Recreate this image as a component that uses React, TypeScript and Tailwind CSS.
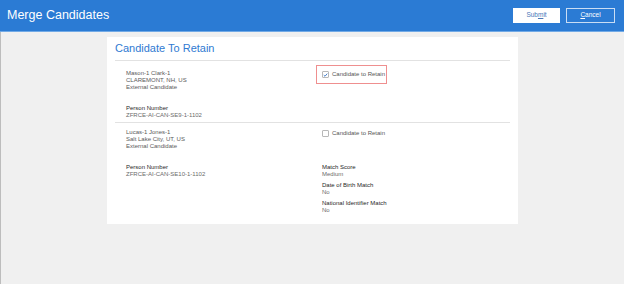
import React from "react";

const font = { fontFamily: '"Liberation Sans", Arial, sans-serif' };

function Checkbox({ checked }: { checked?: boolean }) {
  return (
    <span className="flex h-[7px] w-[7px] items-center justify-center rounded-[1px] border border-[#b8b8b8] bg-white">
      {checked && (
        <svg viewBox="0 0 8 8" className="h-[6px] w-[6px]">
          <path d="M1.2 4.2 L3.2 6 L6.8 1.8" fill="none" stroke="#2f6fc4" strokeWidth="1.4" />
        </svg>
      )}
    </span>
  );
}

function RetainToggle({ checked }: { checked?: boolean }) {
  return (
    <div className="flex items-center gap-[3px] text-[6px] leading-[7px] text-[#555]">
      <Checkbox checked={checked} />
      <span>Candidate to Retain</span>
    </div>
  );
}

function Field({ label, value, className = "" }: { label: string; value: string; className?: string }) {
  return (
    <div className={"text-[6px] leading-[7px] " + className}>
      <div className="text-[#1f1f1f]">{label}</div>
      <div className="text-[#6b6b6b]">{value}</div>
    </div>
  );
}

export default function App() {
  return (
    <div className="flex h-[284px] w-[624px] flex-col overflow-hidden bg-[#f0f0f0]" style={font}>
      {/* header bar */}
      <div className="flex h-[32px] shrink-0 items-center justify-between border-b border-[#72aae6] bg-[#2b7bd4] pl-[7px] pr-[9px]">
        <div className="text-[12.5px] text-white">Merge Candidates</div>
        <div className="flex gap-[6px] pb-[1px]">
          <button className="flex h-[15px] w-[47px] items-center justify-center bg-white text-[6.5px] text-[#4a78b8]">
            Sub<span className="underline">m</span>it
          </button>
          <button className="flex h-[15px] w-[49px] items-center justify-center border border-[#c9ddf4] text-[6.5px] text-white">
            <span className="underline">C</span>ancel
          </button>
        </div>
      </div>

      <div className="flex-1 border-l border-[#bdbdbd] pl-[106px] pt-[5px]">
        <div className="w-[411px] bg-white px-[8px] pb-[10px] pt-[5px]">
          <div className="text-[11px] leading-[13px] text-[#2f7ad2]">Candidate To Retain</div>
          <div className="mt-[5px] border-t border-[#e2e2e2]" />

          {/* first candidate */}
          <div className="grid grid-cols-[196px_1fr] gap-y-[14px] pl-[11px] pt-[9px] pb-[3px]">
            <div className="text-[6px] leading-[7px] text-[#5a5a5a]">
              <div>Mason-1 Clark-1</div>
              <div>CLAREMONT, NH, US</div>
              <div>External Candidate</div>
            </div>
            <div>
              <div className="-ml-[6px] -mt-[5px] flex h-[19px] w-[71px] items-center border border-[#ef8f8f] pl-[5px]">
                <RetainToggle checked />
              </div>
            </div>
            <Field label="Person Number" value="ZFRCE-AI-CAN-SE9-1-1102" />
            <div />
          </div>

          <div className="border-t border-[#e2e2e2]" />

          {/* second candidate */}
          <div className="grid grid-cols-[196px_1fr] gap-y-[14px] pl-[11px] pt-[6px]">
            <div className="text-[6px] leading-[7px] text-[#5a5a5a]">
              <div>Lucas-1 Jones-1</div>
              <div>Salt Lake City, UT, US</div>
              <div>External Candidate</div>
            </div>
            <div className="pt-[1px]">
              <RetainToggle />
            </div>
            <Field label="Person Number" value="ZFRCE-AI-CAN-SE10-1-1102" />
            <div className="flex flex-col gap-[4px]">
              <Field label="Match Score" value="Medium" />
              <Field label="Date of Birth Match" value="No" />
              <Field label="National Identifier Match" value="No" />
            </div>
          </div>
        </div>
      </div>
    </div>
  );
}
